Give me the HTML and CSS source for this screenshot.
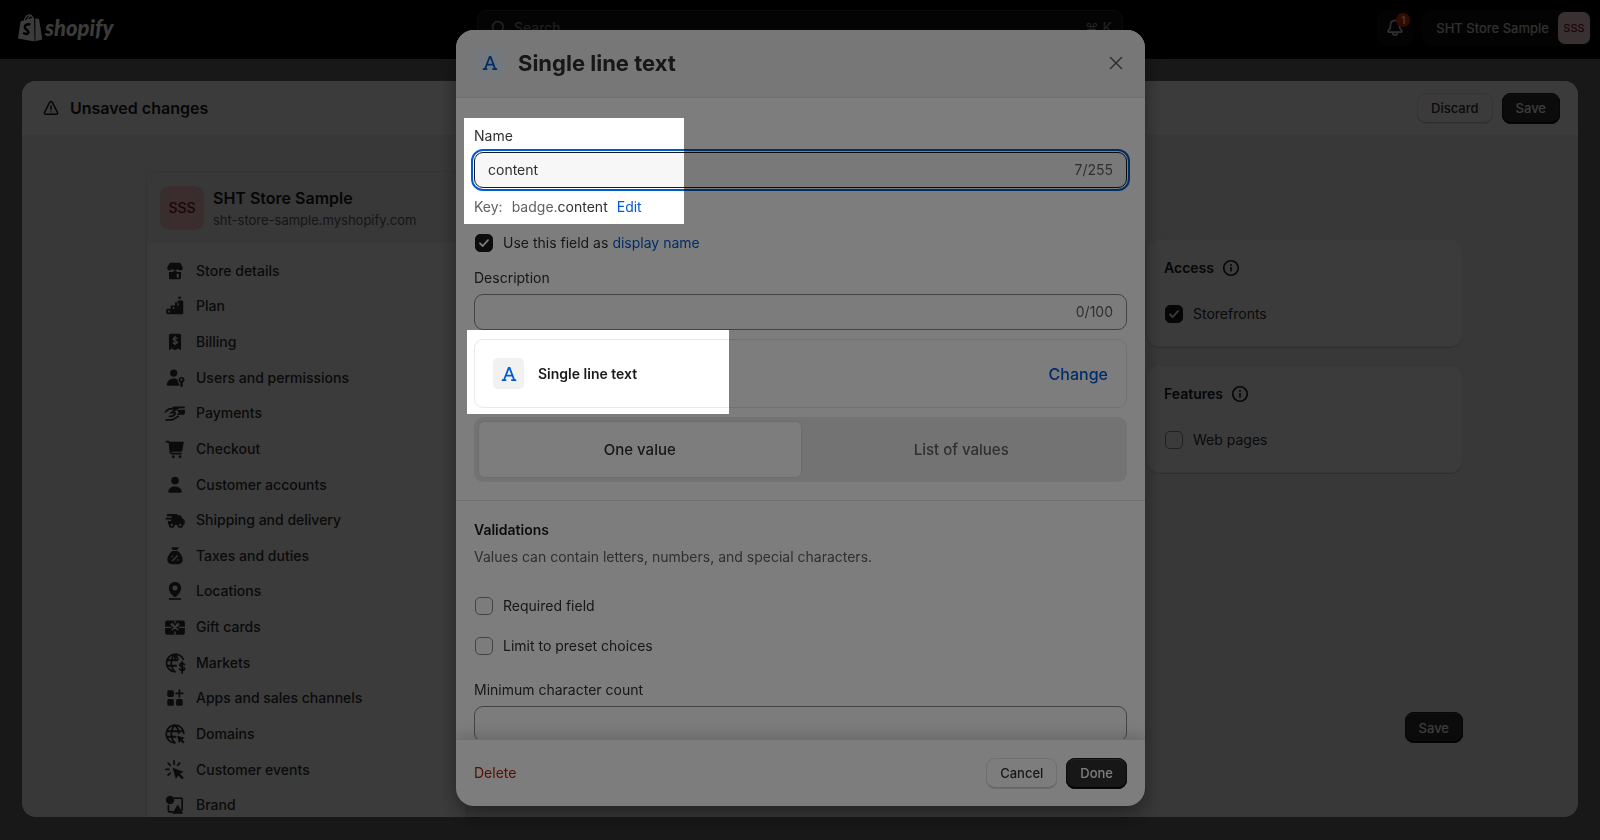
FILE: index.html
```
<!DOCTYPE html>
<html lang="en">
<head>
    <meta charset="UTF-8">
    <meta name="viewport" content="width=device-width, initial-scale=1.0">
    <title>Single line text</title>
    <link rel="stylesheet" href="styles.css">
</head>
<body>
    <header class="topbar">
        <a class="logo" href="#">
            <svg width="25" height="28" viewBox="0 0 25 28" fill="currentColor">
                <path d="M2.600 7.300 16 3.600 16.600 27.600 0 24.600z"/>
                <path d="M17.300 4.200 21 5 24.300 25.600 17.400 27.300z"/>
                <path d="M6 7.500C7 3 9.500.8 11.600.8c2 0 3 2 3.200 4.500M9.300 6.500C10 3 12 1.500 13.500 2" fill="none" stroke="currentColor" stroke-width="1.200"/>
                <path d="M12.400 10.700C9.500 9.500 6.700 11 6.800 13.300 7 15.800 10.500 15.900 10.400 18.300 10.300 20.500 7.500 20.300 5.200 18.800" fill="none" stroke="#000" stroke-width="2.500"/>
            </svg>
            <span class="logo-text">shopify</span>
        </a>
        <label class="search">
            <svg width="22" height="22" viewBox="0 0 20 20" fill="none" stroke="currentColor" stroke-width="1.500" stroke-linecap="round"><circle cx="9" cy="9" r="4.800"/><path d="m12.700 12.700 3 3"/></svg>
            <input type="search" placeholder="Search" aria-label="Search">
            <span>⌘ K</span>
        </label>
        <div class="topbar-right">
            <button class="bell" aria-label="Notifications">
                <svg width="22" height="22" viewBox="0 0 20 20" fill="none" stroke="currentColor" stroke-width="1.500" stroke-linejoin="round"><path d="M10 3.200c-2.400 0-4 1.800-4.100 4.100l-.2 2.600-1.900 2.600c-.4.600 0 1.200.6 1.200h11.200c.600 0 1-.6.6-1.200l-1.900-2.600-.2-2.600C14 5 12.400 3.200 10 3.200zM7.800 14c0 1.400 1 2.300 2.200 2.300s2.200-.9 2.200-2.300"/></svg>
                <span class="bell-count">1</span>
            </button>
            <button class="account">SHT Store Sample <span class="avatar avatar-small">SSS</span></button>
        </div>
    </header>

    <main class="panel">
        <div class="savebar">
            <svg width="20" height="20" viewBox="0 0 20 20" fill="none" stroke="currentColor" stroke-width="1.500" stroke-linecap="round" stroke-linejoin="round"><path d="M8.800 4.200 3.500 14.300c-.5.900.1 2 1.200 2h10.600c1.100 0 1.700-1.100 1.200-2L11.200 4.200c-.5-.9-1.900-.9-2.400 0zM10 8v3.300M10 13.700v.1"/></svg>
            <h1>Unsaved changes</h1>
            <button class="btn">Discard</button>
            <button class="btn btn-dark">Save</button>
        </div>

        <div class="page">
            <aside class="settings">
                <div class="store">
                    <span class="avatar">SSS</span>
                    <div>
                        <h2>SHT Store Sample</h2>
                        <p>sht-store-sample.myshopify.com</p>
                    </div>
                </div>
                <nav class="settings-nav">
                    <a href="#"><svg viewBox="0 0 20 20"><path d="M5.200 2.500h9.600l2.200 4c.5 2-1 3-2.300 3-1 0-1.800-.5-2.300-1.300-.5.800-1.400 1.300-2.400 1.300S8.100 9 7.600 8.200C7.100 9 6.300 9.500 5.300 9.500 4 9.500 2.500 8.500 3 6.500z"/><path d="M4.500 11h3.300l2.200-1.500L12.200 11h3.300v5c0 .8-.5 1.500-1.500 1.500H6c-1 0-1.500-.7-1.500-1.500z"/><path class="cut" d="M11.500 12.500h2v3.500h-2z"/></svg>Store details</a>
                    <a href="#"><svg viewBox="0 0 20 20"><path d="M3 12.500h3v-3h4v-3h2.500V5h4c.6 0 1 .4 1 1v10.500c0 .6-.4 1-1 1H3.500c-1 0-1.500-.5-1.500-1.500v-2.500c0-.6.400-1 1-1zM12.300 1.500h4L14.300 4z"/><path class="cut" d="M3.800 14h1.400v1.800H3.800zM8 10.800h1.300v2H8zM12 7.500h1.400v2H12z"/></svg>Plan</a>
                    <a href="#"><svg viewBox="0 0 20 20"><path d="M4.500 4c0-.8.700-1.500 1.500-1.500h8c.8 0 1.500.7 1.500 1.500v13.500l-2.700-1.600-2.800 1.600-2.800-1.600-2.700 1.600z"/><path class="cut-line" d="M12 7c-.3-1-3.800-1.300-3.800.5 0 2 3.900.800 3.900 2.800 0 1.700-3.600 1.500-4.100.2M10 4.500v8.500"/></svg>Billing</a>
                    <a href="#"><svg viewBox="0 0 20 20"><circle cx="8.800" cy="5.500" r="3.300"/><path d="M2.500 16c.5-3.500 3-5.500 6.300-5.500 1.500 0 2.700.4 3.500 1 0 1.400.5 2.500 1.500 3.200V17H3.500c-.6 0-1-.4-1-1z"/><path d="M15.800 9a2.700 2.700 0 0 0-1 5.200V17.500l1 1 1.200-1v-3.300A2.700 2.700 0 0 0 15.800 9z"/><circle class="cut" cx="15.800" cy="11.500" r="1"/></svg>Users and permissions</a>
                    <a href="#"><svg viewBox="0 0 20 20"><path d="M8.500 4H18c.6 0 1 .4 1 1v.6H6.800zM11.500 7H19v3.300c0 .8-.5 1.300-1.300 1.300H11.500l2-2z"/><path class="line" d="M1.300 9 4.500 6.200H11.500L7 9.600h2.500c1.300 0 1 1.500-.3 2.200L7.500 13H5M2 16.300h5.500L13 13"/></svg>Payments</a>
                    <a href="#"><svg viewBox="0 0 20 20"><path d="M1.500 2.500H4c.7 0 1.200.4 1.400 1H18L16.800 11c-.2 1-.8 1.500-1.800 1.500H6.500c.1.800.5 1 1 1H16V15H7.500C6 15 5 14 5 12.500L4.200 4H1.500z"/><circle cx="8.500" cy="17" r="1.300"/><circle cx="14.500" cy="17" r="1.300"/></svg>Checkout</a>
                    <a href="#"><svg viewBox="0 0 20 20"><circle cx="10" cy="6" r="3.500"/><path d="M3.800 16c.5-3.200 3-4.700 6.200-4.700s5.700 1.500 6.200 4.700c0 .6-.4 1-1 1H4.800c-.6 0-1-.4-1-1z"/></svg>Customer accounts</a>
                    <a href="#"><svg viewBox="0 0 20 20"><path d="M4 4.500h7c.8 0 1.300.5 1.300 1.200h2.200c.5 0 1 .3 1.200.7l1 2.300 1.200.6c.6.300.9.8.9 1.400v2.500c0 .8-.5 1.300-1.300 1.300H5c-.8 0-1.500-.5-1.500-1.500v-2h3v-1.500H1.500V8H7V6.500H2.500C2.500 5 3 4.500 4 4.500z"/><circle cx="7" cy="14.500" r="2.600"/><circle cx="14.800" cy="14.500" r="2.600"/><circle class="cut" cx="7" cy="14.500" r="1"/><circle class="cut" cx="14.800" cy="14.500" r="1"/></svg>Shipping and delivery</a>
                    <a href="#"><svg viewBox="0 0 20 20"><path d="M6.500 2h7l-1.300 2.500H7.800zM7.500 5.500h5c2.500 2 4.500 5 4.500 8 0 2.500-1.500 4-4 4H7c-2.500 0-4-1.500-4-4 0-3 2-6 4.500-8z"/><path class="cut-line" d="m7.500 14.500 5-5M7.500 9.800v1.400M12.500 13v1.400"/></svg>Taxes and duties</a>
                    <a href="#"><svg viewBox="0 0 20 20"><path fill-rule="evenodd" d="M10 1.800c3.300 0 5.500 2.500 5.500 5.500 0 3.500-2.500 6.500-5 8.200h-1C7 13.800 4.500 10.800 4.500 7.300c0-3 2.200-5.500 5.500-5.500zm0 3.200a2.300 2.300 0 1 0 0 4.600A2.300 2.300 0 0 0 10 5z"/><path d="M4.500 16.500h11V18h-11z"/></svg>Locations</a>
                    <a href="#"><svg viewBox="0 0 20 20"><rect x="1" y="4" width="18" height="13" rx="2"/><path class="cut-line" d="M1 10.300h5.500M13.500 10.300H19M10 4v2.500M10 14v3M10 10.300 7 8.500c-1-1 0-2 1-1zM10 10.300l3-1.800c1-1 0-2-1-1zM10 10.300 7 13M10 10.300l3 2.700"/></svg>Gift cards</a>
                    <a href="#"><svg viewBox="0 0 20 20"><path class="line" d="M17.500 6.500A8 8 0 1 0 10 18M10 2.200C5.500 6 5.500 14 10 18M10 2.200c1.500 1.500 2.300 3 2.600 4.500M2.500 7.500H12M2.500 12.500h8.500M10 2.200v5.500"/><path class="line" d="M18.500 11.500c-.5-1.500-4-1.500-4 .5s4.200 1 4.200 3.200c0 2-3.800 2-4.400.3M16.500 9v10"/></svg>Markets</a>
                    <a href="#"><svg viewBox="0 0 20 20"><rect x="3" y="3" width="6" height="6" rx="1.400"/><rect x="3" y="11" width="6" height="6" rx="1.400"/><rect x="11" y="11" width="6" height="6" rx="1.400"/><path class="line" d="M14 2.800v6M11 5.800h6"/></svg>Apps and sales channels</a>
                    <a href="#"><svg viewBox="0 0 20 20"><path class="line" d="M18 9.500A8 8 0 1 0 10 18M10 2.200C5.500 6 5.500 14 10 18M10 2.200c2.300 2 3.300 4.500 3.400 7.300M2.500 7.500h15M2.500 12.500h8"/><path d="m12 11.500 7 2-2.500 1.400 2.200 2.400-1.300 1.300-2.300-2.300-1.400 2.200z"/></svg>Domains</a>
                    <a href="#"><svg viewBox="0 0 20 20"><path class="line" d="M9.200 1.800v3M3.800 3.800l1.900 1.900M1.800 9.500h2.700M3.800 14.700l1.800-1.800M14.200 3.800l-1.800 1.900"/><path d="m7.800 8 10 3.500-3.300 2 3.500 3.500-1.500 1.500-3.500-3.500-2.200 3.200z"/></svg>Customer events</a>
                    <a href="#"><svg viewBox="0 0 20 20"><circle cx="5.500" cy="5.500" r="3.800"/><path class="line" d="M9.500 3.700h6c.6 0 1 .4 1 1v10M4 10.500V15c0 .8.500 1.200 1.300 1.200H8"/><path d="m12.500 9.500 5 8.500h-10z"/></svg>Brand</a>
                </nav>
            </aside>

            <div class="side">
                <section class="card">
                    <h2>Access <svg width="22" height="22" viewBox="0 0 20 20" fill="none" stroke="currentColor" stroke-width="1.500"><circle cx="10" cy="10" r="6.600"/><path d="M10 9.200v4M10 6.400v1.600"/></svg></h2>
                    <label class="check"><input type="checkbox" checked> Storefronts</label>
                </section>
                <section class="card">
                    <h2>Features <svg width="22" height="22" viewBox="0 0 20 20" fill="none" stroke="currentColor" stroke-width="1.500"><circle cx="10" cy="10" r="6.600"/><path d="M10 9.200v4M10 6.400v1.600"/></svg></h2>
                    <label class="check"><input type="checkbox"> Web pages</label>
                </section>
                <button class="btn btn-dark page-save">Save</button>
            </div>
        </div>
    </main>

    <div class="backdrop">
        <section class="modal" role="dialog" aria-labelledby="modalTitle">
            <header class="modal-header">
                <span class="type-icon type-icon-blue"><svg width="18" height="18" viewBox="0 0 18 18" fill="none" stroke="currentColor" stroke-width="1.800"><path d="m4 15 4.700-12h.9l4.600 12M6 10.700h6.500M1.800 15.200h4.500M11.200 15.200h5"/></svg></span>
                <h2 id="modalTitle">Single line text</h2>
                <button class="close" aria-label="Close"><svg width="14" height="14" viewBox="0 0 14 14" stroke="currentColor" stroke-width="1.500" stroke-linecap="round"><path d="m1.500 1.500 11 11M12.500 1.500l-11 11"/></svg></button>
            </header>

            <div class="modal-body">
                <div class="definition">
                    <div class="field">
                        <label for="name">Name</label>
                        <div class="input focused"><input id="name" type="text" value="content"><span>7/255</span></div>
                    </div>
                    <p class="key">Key: <span>badge.<b>content</b></span> <a href="#">Edit</a></p>
                    <div class="check">
                        <input id="displayName" type="checkbox" checked>
                        <label for="displayName">Use this field as</label> <a href="#">display name</a>
                    </div>
                    <div class="field">
                        <label for="description">Description</label>
                        <div class="input"><input id="description" type="text"><span>0/100</span></div>
                    </div>
                    <div class="type">
                        <span class="type-icon"><svg width="18" height="18" viewBox="0 0 18 18" fill="none" stroke="currentColor" stroke-width="1.800"><path d="m4 15 4.700-12h.9l4.600 12M6 10.700h6.500M1.800 15.200h4.500M11.200 15.200h5"/></svg></span>
                        <strong>Single line text</strong>
                        <button class="change">Change</button>
                    </div>
                    <div class="segmented">
                        <button class="active">One value</button>
                        <button>List of values</button>
                    </div>
                </div>

                <div class="validations">
                    <h3>Validations</h3>
                    <p>Values can contain letters, numbers, and special characters.</p>
                    <label class="check"><input type="checkbox"> Required field</label>
                    <label class="check"><input type="checkbox"> Limit to preset choices</label>
                    <div class="field">
                        <label for="minCount">Minimum character count</label>
                        <div class="input"><input id="minCount" type="text"></div>
                    </div>
                </div>
            </div>

            <footer class="modal-footer">
                <button class="delete">Delete</button>
                <button class="btn">Cancel</button>
                <button class="btn btn-dark">Done</button>
            </footer>
        </section>
    </div>

    <div class="spotlight"></div>
</body>
</html>
```
FILE: styles.css
```
* {
    box-sizing: border-box;
}
body {
    margin: 0;
    height: 100vh;
    display: flex;
    flex-direction: column;
    overflow: hidden;
    background: #686868;
    color: #1a1a1a;
    font-family: Inter, "Liberation Sans", sans-serif;
    font-size: 14px;
    line-height: 20px;
}
h1, h2, h3, p {
    margin: 0;
}
button, input {
    font: inherit;
    color: inherit;
}
button {
    border: none;
    background: none;
    padding: 0;
    cursor: pointer;
}
a {
    color: #005bd3;
    text-decoration: none;
}
svg {
    flex: none;
}

/* top bar */
.topbar {
    flex: none;
    height: 59px;
    padding: 0 8px 3px;
    display: grid;
    grid-template-columns: 1fr minmax(0, 646px) 1fr;
    align-items: center;
    background: #000;
    color: #d0d0d0;
}
.logo {
    padding-left: 10px;
    display: flex;
    align-items: center;
    gap: 2px;
    color: #fff;
}
.logo-text {
    font: italic 900 22px/28px Lato, sans-serif;
}
.search {
    height: 36px;
    padding: 0 10px;
    display: flex;
    align-items: center;
    gap: 2px;
    border: 1px solid #303030;
    border-radius: 10px;
    background: #141414;
    color: #9a9a9a;
}
.search input {
    flex: 1;
    min-width: 0;
    border: none;
    background: none;
    outline: none;
}
.search input::placeholder {
    color: #9a9a9a;
}
.topbar-right {
    display: flex;
    justify-content: flex-end;
    gap: 9px;
}
.bell {
    position: relative;
    width: 36px;
    height: 36px;
    display: flex;
    align-items: center;
    justify-content: center;
    border-radius: 9px;
    background: #101010;
}
.bell-count {
    position: absolute;
    top: 3px;
    right: 3px;
    width: 14px;
    border-radius: 7px;
    background: #e22c0c;
    color: #fff;
    font-size: 10px;
    font-weight: 600;
    line-height: 14px;
}
.account {
    height: 36px;
    padding: 0 2px 0 14px;
    display: flex;
    align-items: center;
    gap: 9px;
    border-radius: 9px;
    background: #101010;
    font-size: 13px;
    font-weight: 500;
}
.avatar {
    flex: none;
    width: 44px;
    height: 44px;
    display: flex;
    align-items: center;
    justify-content: center;
    border-radius: 9px;
    background: #f8c0c4;
    color: #80102f;
    font-weight: 500;
}
.avatar-small {
    width: 32px;
    height: 32px;
    border-radius: 7px;
    background: #f6cfd4;
    font-size: 11px;
}

/* settings panel */
.panel {
    flex: 1;
    min-height: 0;
    margin: 22px 22px 23px;
    display: flex;
    flex-direction: column;
    overflow: hidden;
    border-radius: 14px;
    background: #f1f1f1;
}
.savebar {
    flex: none;
    height: 54px;
    padding: 0 18px 0 19px;
    display: flex;
    align-items: center;
    gap: 9px;
    background: #fff;
}
.savebar h1 {
    flex: 1;
    font-size: 16px;
    font-weight: 600;
}
.btn {
    height: 31px;
    padding: 0 14px;
    border-radius: 9px;
    background: #fff;
    box-shadow: inset 0 0 0 1px #e3e3e3, inset 0 -2px 0 #ccc;
    color: #303030;
    font-size: 13px;
    font-weight: 500;
}
.btn-dark {
    background: #303030;
    box-shadow: inset 0 0 0 1px #1a1a1a, inset 0 -2px 0 #000, inset 0 2px 0 #4a4a4a;
    color: #fff;
}
.page {
    padding: 36px 115px 0 124px;
    display: flex;
    justify-content: space-between;
    align-items: flex-start;
}
.settings {
    width: 321px;
    border: 1px solid #e0e0e0;
    border-radius: 10px;
    background: #fff;
    overflow: hidden;
}
.store {
    height: 71px;
    padding: 0 13px;
    display: flex;
    align-items: center;
    gap: 9px;
    background: #f1f1f1;
}
.store h2 {
    font-size: 16px;
    font-weight: 600;
    line-height: 24px;
}
.store p {
    color: #616161;
    font-size: 13px;
}
.settings-nav {
    height: 580px;
    padding-top: 10px;
    display: flex;
    flex-direction: column;
}
.settings-nav a {
    flex: 1;
    padding-left: 17px;
    display: flex;
    align-items: center;
    gap: 10px;
    color: #303030;
    font-weight: 500;
}
.settings-nav svg {
    width: 22px;
    height: 22px;
    fill: #303030;
}
.settings-nav .cut {
    fill: #fff;
}
.settings-nav .cut-line {
    fill: none;
    stroke: #fff;
    stroke-width: 1.2;
}
.settings-nav .line {
    fill: none;
    stroke: #303030;
    stroke-width: 1.6;
    stroke-linecap: round;
}
.side {
    width: 317px;
    padding-top: 68px;
    display: flex;
    flex-direction: column;
    gap: 18px;
}
.card {
    height: 108px;
    padding: 18px;
    display: flex;
    flex-direction: column;
    gap: 25px;
    border-radius: 13px;
    background: #fff;
    box-shadow: inset 0 0 0 1px #ebebeb, 0 1px 0 #ccc;
}
.card h2 {
    display: flex;
    align-items: center;
    gap: 6px;
    font-size: 14px;
    font-weight: 600;
    line-height: 22px;
}
.page-save {
    align-self: flex-end;
    margin-top: 221px;
}

/* form controls */
.check {
    display: flex;
    align-items: center;
    gap: 10px;
    color: #303030;
}
.check label + a {
    margin-left: -6px;
}
.check input {
    appearance: none;
    flex: none;
    width: 18px;
    height: 18px;
    margin: 0 0 0 1px;
    border: 1px solid #8a8a8a;
    border-radius: 5px;
    background: #fdfdfd;
}
.check input:checked {
    border-color: #1a1a1a;
    background: #1a1a1a url("data:image/svg+xml,%3Csvg xmlns='http://www.w3.org/2000/svg' viewBox='0 0 16 16'%3E%3Cpath d='M4 8.300l2.700 2.700L12 5.200' fill='none' stroke='white' stroke-width='1.800' stroke-linecap='round' stroke-linejoin='round'/%3E%3C/svg%3E");
}
.field {
    display: flex;
    flex-direction: column;
    gap: 6px;
    color: #303030;
}
.input {
    height: 36px;
    padding: 0 13px;
    display: flex;
    align-items: center;
    border: 1px solid #8a8a8a;
    border-radius: 9px;
    background: #fdfdfd;
}
.input input {
    flex: 1;
    min-width: 0;
    padding: 0;
    border: none;
    outline: none;
    background: none;
}
.input span {
    color: #616161;
}
.input.focused {
    border-color: #1a1a1a;
    background: #f7f7f7;
    outline: 2px solid #005bd3;
    outline-offset: 1px;
}

/* modal */
.backdrop {
    position: fixed;
    inset: 0;
    padding: 30px 0 34px 1px;
    display: flex;
    justify-content: center;
    background: rgba(0, 0, 0, 0.53);
}
.modal {
    width: 689px;
    display: flex;
    flex-direction: column;
    overflow: hidden;
    border-radius: 18px;
    background: #fff;
    box-shadow: 0 8px 20px rgba(0, 0, 0, 0.4);
}
.modal-header {
    flex: none;
    height: 68px;
    padding: 0 18px 2px;
    display: flex;
    align-items: center;
    gap: 13px;
    border-bottom: 1px solid #e3e3e3;
    background: #f3f3f3;
}
.modal-header h2 {
    flex: 1;
    font-size: 22px;
    font-weight: 700;
    line-height: 28px;
    color: #303030;
}
.type-icon {
    width: 31px;
    height: 31px;
    display: flex;
    align-items: center;
    justify-content: center;
    border-radius: 5px;
    background: #f1f1f1;
    color: #005bd3;
}
.type-icon-blue {
    background: #eaf4ff;
}
.close {
    width: 22px;
    height: 22px;
    display: flex;
    align-items: center;
    justify-content: center;
    color: #616161;
}
.modal-body {
    flex: 1;
    min-height: 0;
    overflow: hidden;
}
.definition {
    padding: 28px 18px 18px;
    display: flex;
    flex-direction: column;
    gap: 9px;
    border-bottom: 1px solid #e3e3e3;
}
.key {
    display: flex;
    gap: 9px;
    color: #616161;
}
.key b {
    color: #303030;
    font-weight: 400;
}
.definition > .check {
    margin: 7px 0 6px;
}
.type {
    height: 69px;
    padding: 0 18px;
    display: flex;
    align-items: center;
    gap: 14px;
    border: 1px solid #e9e9e9;
    border-radius: 9px;
}
.type strong {
    flex: 1;
    font-weight: 600;
}
.change {
    color: #005bd3;
    font-size: 16px;
    font-weight: 500;
}
.segmented {
    height: 65px;
    padding: 5px;
    display: flex;
    border-radius: 9px;
    background: #ebebeb;
}
.segmented button {
    flex: 1;
    border-radius: 5px;
    color: #616161;
    font-size: 15px;
    font-weight: 500;
}
.segmented .active {
    background: #fff;
    box-shadow: 0 0 2px rgba(0, 0, 0, 0.2);
    color: #303030;
}
.validations {
    padding: 19px 18px;
    display: flex;
    flex-direction: column;
    gap: 20px;
}
.validations h3 {
    font-size: 14px;
    font-weight: 600;
}
.validations p {
    margin: -13px 0 9px;
    color: #616161;
}
.validations .field {
    margin-top: 4px;
}
.modal-footer {
    position: relative;
    flex: none;
    height: 67px;
    padding: 0 18px;
    display: flex;
    align-items: center;
    gap: 9px;
    border-top: 1px solid #e3e3e3;
    box-shadow: 0 -4px 14px rgba(0, 0, 0, 0.16);
}
.delete {
    margin-right: auto;
    color: #b0200e;
}

/* tour overlay, everything is dimmed except the two highlighted areas */
.spotlight {
    position: fixed;
    inset: 0;
    pointer-events: none;
    background: rgba(0, 0, 0, 0.51);
    clip-path: polygon(evenodd,
        0 0, 100% 0, 100% 100%, 0 100%, 0 0,
        calc(50% - 336px) 118px, calc(50% - 116px) 118px, calc(50% - 116px) 224px, calc(50% - 336px) 224px, calc(50% - 336px) 118px,
        0 0,
        calc(50% - 333px) 330px, calc(50% - 71px) 330px, calc(50% - 71px) 414px, calc(50% - 333px) 414px, calc(50% - 333px) 330px,
        0 0);
}
```
